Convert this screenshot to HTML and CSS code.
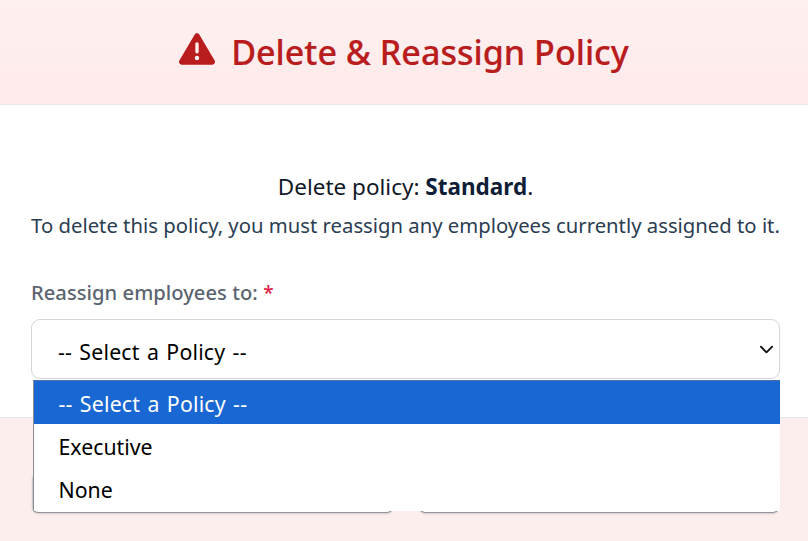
FILE: index.html
```html
<!DOCTYPE html>
<html lang="en">
<head>
<meta charset="utf-8">
<title>Delete &amp; Reassign Policy</title>
<link rel="stylesheet" href="styles.css">
</head>
<body>
<div class="modal">
  <header class="modal-header">
    <h1 class="modal-title">
      <svg class="warn-icon" viewBox="0 0 512 512" aria-hidden="true"><path fill-rule="evenodd" d="M256 32c14.2 0 27.3 7.5 34.5 19.8l216 368c7.3 12.4 7.3 27.7.2 40.1S486.3 480 472 480H40c-14.3 0-27.600-7.700-34.700-20.100s-7-27.800.2-40.100l216-368C228.700 39.500 241.800 32 256 32zm0 128c-13.300 0-24 10.700-24 24v112c0 13.300 10.700 24 24 24s24-10.700 24-24V184c0-13.300-10.700-24-24-24zm32 224a32 32 0 1 0-64 0 32 32 0 1 0 64 0z"/></svg>
      <span>Delete &amp; Reassign Policy</span>
    </h1>
  </header>
  <main class="modal-body">
    <p class="lead">Delete policy: <strong>Standard</strong>.</p>
    <p class="note">To delete this policy, you must reassign any employees currently assigned to it.</p>
    <label class="field-label">Reassign employees to: <span class="req">*</span></label>
    <div class="select">
      <span>-- Select a Policy --</span>
      <svg class="chev" viewBox="0 0 16 16" aria-hidden="true"><path d="M2 5l6 6 6-6" fill="none" stroke="currentColor" stroke-width="2" stroke-linecap="round" stroke-linejoin="round"/></svg>
    </div>
  </main>
  <footer class="modal-footer">
    <div class="btn"></div>
    <div class="btn"></div>
  </footer>
  <ul class="dropdown">
    <li class="option selected">-- Select a Policy --</li>
    <li class="option">Executive</li>
    <li class="option">None</li>
  </ul>
</div>
</body>
</html>
```
FILE: styles.css
```css
* { box-sizing: border-box; }
html, body { margin: 0; height: 100%; }
body { font-family: "Noto Sans", "Open Sans", sans-serif; background: #fff; }
.modal { position: relative; width: 808px; height: 541px; display: flex; flex-direction: column; overflow: hidden; }
.modal-header { height: 105px; background: linear-gradient(#fef0ef, #feeaea); border-bottom: 1px solid #e5e7eb; display: flex; align-items: center; justify-content: center; }
.modal-title { margin: 0; display: flex; align-items: center; gap: 16px; font-size: 34.1px; font-weight: 500; color: #b91c1c; line-height: 1; -webkit-text-stroke: .2px #b91c1c; }
.warn-icon { width: 36px; height: 36px; fill: #b91c1c; margin-top: -6px; }
.modal-body { height: 312px; padding: 67px 28px 0 31px; text-align: center; }
.lead { margin: 0; font-size: 22.5px; line-height: 30px; color: #111827; }
.lead strong { font-weight: 700; color: #0f1e36; }
.note { margin: 8px 0 0; font-size: 20.3px; line-height: 30px; color: #2b3d52; white-space: nowrap; }
.field-label { display: block; margin-top: 37px; text-align: left; font-size: 20.2px; font-weight: 500; line-height: 30px; color: #5b6470; word-spacing: .2px; }
.req { color: #dc2146; font-size: 19px; }
.select { margin-top: 11px; height: 60px; padding: 4px 5px 0 26px; display: flex; align-items: center; justify-content: space-between; border: 1px solid #d4d5d8; border-radius: 9px; font-size: 21.3px; word-spacing: 1.5px; letter-spacing: .2px; color: #000; background: #fff; }
.chev { width: 15px; height: 15px; color: #111; margin: -4px 0 0 0; }
.modal-footer { flex: 1; background: #fdeeee; border-top: 1px solid #e5e7eb; padding: 0 29px 28px 32px; display: flex; gap: 26px; align-items: flex-end; }
.btn { flex: 1; height: 40px; background: #fff; border-radius: 6px; border: 1px solid #c9cbce; border-bottom-color: #8f959b; box-shadow: 0 1px 2px rgba(0,0,0,.15); }
.dropdown { position: absolute; left: 33px; top: 380px; width: 747px; height: 131px; margin: 0; padding: 0; list-style: none; background: #fff; border-top: 1px solid #4a6fa8; border-left: 1px solid #8a8f96; overflow: hidden; font-size: 21.3px; color: #000; }
.option { height: 43px; padding: 3px 0 0 24.5px; line-height: 39px; }
.selected { background: #1967d2; color: #fff; word-spacing: 1.5px; letter-spacing: .2px; }
```
